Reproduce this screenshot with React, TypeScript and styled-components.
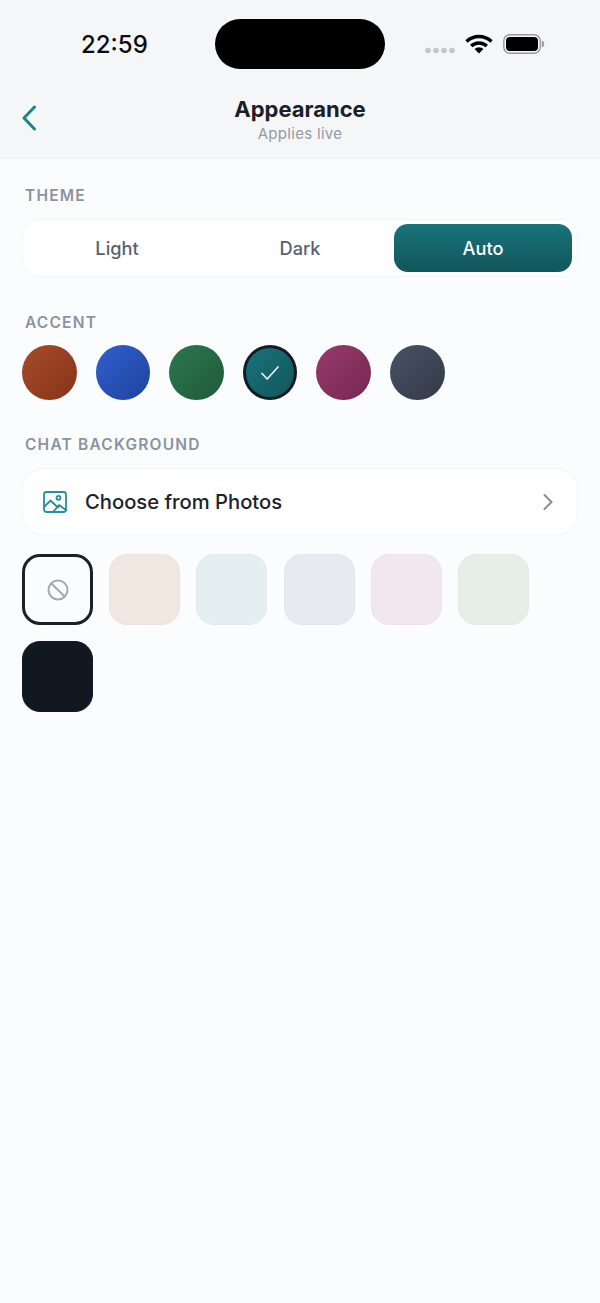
import React from 'react';
import styled, { createGlobalStyle } from 'styled-components';

const GlobalStyle = createGlobalStyle`
  html, body {
    margin: 0;
    padding: 0;
    background: #fbfcfe;
  }
  * {
    box-sizing: border-box;
  }
`;

const Page = styled.div`
  width: 600px;
  height: 1303px;
  overflow: hidden;
  background: #fbfcfe;
  font-family: Inter, "Noto Sans", sans-serif;
  color: #1a1f27;
`;

const Header = styled.header`
  height: 159px;
  background: #f5f6f8;
  border-bottom: 1px solid #eff1f3;
`;

const StatusBar = styled.div`
  height: 88px;
  position: relative;
`;

const Clock = styled.div`
  position: absolute;
  left: 81px;
  top: 30px;
  font-family: Inter, sans-serif;
  font-size: 24px;
  line-height: 30px;
  font-weight: 500;
  color: #0b0b0d;
`;

const Island = styled.div`
  position: absolute;
  left: 215px;
  top: 19px;
  width: 170px;
  height: 50px;
  border-radius: 25px;
  background: #000;
`;

const StatusIcons = styled.div`
  position: absolute;
  left: 425px;
  top: 39px;
  display: flex;
  align-items: center;
`;

const Nav = styled.div`
  position: relative;
  height: 70px;
  display: flex;
  flex-direction: column;
  align-items: center;
`;

const BackButton = styled.button`
  position: absolute;
  left: 17px;
  top: 14px;
  width: 24px;
  height: 32px;
  padding: 0;
  border: 0;
  background: none;
  display: flex;
  align-items: center;
  justify-content: center;
`;

const Title = styled.div`
  font-size: 22px;
  line-height: 26px;
  font-weight: 700;
  margin-top: 8px;
  color: #1b2027;
`;

const Subtitle = styled.div`
  font-size: 15px;
  line-height: 20px;
  letter-spacing: 0.3px;
  margin-top: 2px;
  color: #949ba6;
`;

const Content = styled.main`
  padding: 0 22px;
`;

const SectionLabel = styled.div<{ $top: number }>`
  margin-top: ${(p) => p.$top}px;
  margin-left: 3px;
  font-size: 15.5px;
  line-height: 18px;
  font-weight: 600;
  letter-spacing: 1.2px;
  color: #8b93a0;
`;

const Segmented = styled.div`
  margin-top: 14px;
  height: 58px;
  padding: 4px 5px;
  display: flex;
  gap: 5px;
  background: #fff;
  border: 1px solid #f2f4f6;
  border-radius: 17px;
`;

const Segment = styled.div<{ $active?: boolean }>`
  flex: 1;
  display: flex;
  align-items: center;
  justify-content: center;
  border-radius: 14px;
  font-size: 18.2px;
  font-weight: 550;
  color: ${(p) => (p.$active ? '#ffffff' : '#5a616d')};
  background: ${(p) => (p.$active ? 'linear-gradient(180deg, #19737a, #12565c)' : 'transparent')};
`;

const AccentRow = styled.div`
  margin-top: 13px;
  display: flex;
  gap: 19px;
`;

const Accent = styled.div<{ $from: string; $to: string; $selected?: boolean }>`
  width: 54.6px;
  height: 55px;
  border-radius: 50%;
  display: flex;
  align-items: center;
  justify-content: center;
  background: linear-gradient(135deg, ${(p) => p.$from}, ${(p) => p.$to});
  border: ${(p) => (p.$selected ? '3px solid #161c24' : '0')};
`;

const PhotosRow = styled.div`
  margin-top: 14px;
  height: 67px;
  padding: 0 23px 0 20px;
  display: flex;
  align-items: center;
  background: #fff;
  border: 1px solid #f2f4f6;
  border-radius: 21px;
`;

const PhotosText = styled.div`
  flex: 1;
  margin-left: 18px;
  font-size: 20.2px;
  font-weight: 550;
  color: #1d222a;
`;

const TileGrid = styled.div`
  margin-top: 19px;
  display: grid;
  grid-template-columns: repeat(6, 71px);
  gap: 16px;
  column-gap: 16.2px;
`;

const Tile = styled.div<{ $bg: string; $selected?: boolean; $line?: string }>`
  width: 71px;
  height: 71px;
  border-radius: 18px;
  display: flex;
  align-items: center;
  justify-content: center;
  background: ${(p) => p.$bg};
  border: ${(p) => (p.$selected ? '3px solid #1b2129' : `1px solid ${p.$line ?? 'transparent'}`)};
`;

const accents = [
  { from: '#a84a2a', to: '#85341a' },
  { from: '#2f60cf', to: '#1f429e' },
  { from: '#2c774f', to: '#1f5a39' },
  { from: '#19737a', to: '#12565c', selected: true },
  { from: '#983a6c', to: '#752852' },
  { from: '#485264', to: '#333a49' },
];

const tiles = [
  { bg: '#f0e7e1', line: '#ece3dc' },
  { bg: '#e5eef0', line: '#e0eaec' },
  { bg: '#e9e9f2', line: '#e4e4ee' },
  { bg: '#f3e7ee', line: '#eee2ea' },
  { bg: '#e7eee7', line: '#e2eae2' },
  { bg: '#12181f', line: '#12181f' },
];

function Wifi() {
  return (
    <svg width="28" height="20" viewBox="0 0 28 20" style={{ marginLeft: 9, marginTop: -5 }}>
      <path d="M1.5 7.5 A18 18 0 0 1 26.5 7.5" fill="none" stroke="#000" strokeWidth="3.4" />
      <path d="M6.2 12 A11.5 11.5 0 0 1 21.8 12" fill="none" stroke="#000" strokeWidth="3.4" />
      <path d="M14 19.5 L9.6 15 A6.2 6.2 0 0 1 18.4 15 Z" fill="#000" />
    </svg>
  );
}

function Battery() {
  return (
    <svg width="42" height="20" viewBox="0 0 42 20" style={{ marginLeft: 10, marginTop: -5 }}>
      <rect x="0.8" y="0.8" width="36.4" height="18.4" rx="6" fill="none" stroke="#9a9a9c" strokeWidth="1.4" />
      <rect x="3" y="3" width="32" height="14" rx="4" fill="#000" />
      <path d="M38.8 6.5 C40.6 7 41.2 8.4 41.2 10 C41.2 11.6 40.6 13 38.8 13.5 Z" fill="#9a9a9c" />
    </svg>
  );
}

function Dots() {
  return (
    <svg width="31" height="7" viewBox="0 0 31 7" style={{ marginTop: 7 }}>
      {[3, 11, 19, 27].map((x) => (
        <circle key={x} cx={x} cy="3.5" r="2.8" fill="#c6c7c9" />
      ))}
    </svg>
  );
}

function App() {
  return (
    <Page>
      <GlobalStyle />
      <Header>
        <StatusBar>
          <Clock>22:59</Clock>
          <Island />
          <StatusIcons>
            <Dots />
            <Wifi />
            <Battery />
          </StatusIcons>
        </StatusBar>
        <Nav>
          <BackButton aria-label="Back">
            <svg width="16" height="26" viewBox="0 0 16 26" fill="none">
              <path d="M13.5 2 L3 13 L13.5 24" stroke="#1b8589" strokeWidth="3" strokeLinecap="round" strokeLinejoin="round" />
            </svg>
          </BackButton>
          <Title>Appearance</Title>
          <Subtitle>Applies live</Subtitle>
        </Nav>
      </Header>
      <Content>
        <SectionLabel $top={28}>THEME</SectionLabel>
        <Segmented>
          <Segment>Light</Segment>
          <Segment>Dark</Segment>
          <Segment $active>Auto</Segment>
        </Segmented>
        <SectionLabel $top={37}>ACCENT</SectionLabel>
        <AccentRow>
          {accents.map((a) => (
            <Accent key={a.from} $from={a.from} $to={a.to} $selected={a.selected}>
              {a.selected && (
                <svg width="20" height="16" viewBox="0 0 20 16" fill="none">
                  <path d="M2 8.5 L7.2 14 L18 2" stroke="#e8f2f3" strokeWidth="1.7" strokeLinecap="round" strokeLinejoin="round" />
                </svg>
              )}
            </Accent>
          ))}
        </AccentRow>
        <SectionLabel $top={36}>CHAT BACKGROUND</SectionLabel>
        <PhotosRow>
          <svg width="24" height="24" viewBox="0 0 24 24" fill="none" stroke="#22919a" strokeWidth="1.8" strokeLinejoin="round" strokeLinecap="round">
            <rect x="1" y="2" width="22" height="20" rx="2.5" />
            <circle cx="15.5" cy="7.8" r="2" />
            <path d="M1 17 L7.5 10.5 L15 17.5" />
            <path d="M10 22 L16 15 L23 20" />
          </svg>
          <PhotosText>Choose from Photos</PhotosText>
          <svg width="12" height="18" viewBox="0 0 12 18" fill="none">
            <path d="M2.5 2 L9.5 9 L2.5 16" stroke="#868d99" strokeWidth="2" strokeLinecap="round" strokeLinejoin="round" />
          </svg>
        </PhotosRow>
        <TileGrid>
          <Tile $bg="#fbfcfe" $selected>
            <svg width="22" height="22" viewBox="0 0 22 22" fill="none" stroke="#a3a9b4" strokeWidth="2">
              <circle cx="11" cy="11" r="9.5" />
              <path d="M4.2 4.2 L17.8 17.8" />
            </svg>
          </Tile>
          {tiles.map((t) => (
            <Tile key={t.bg} $bg={t.bg} $line={t.line} />
          ))}
        </TileGrid>
      </Content>
    </Page>
  );
}

export default App;
